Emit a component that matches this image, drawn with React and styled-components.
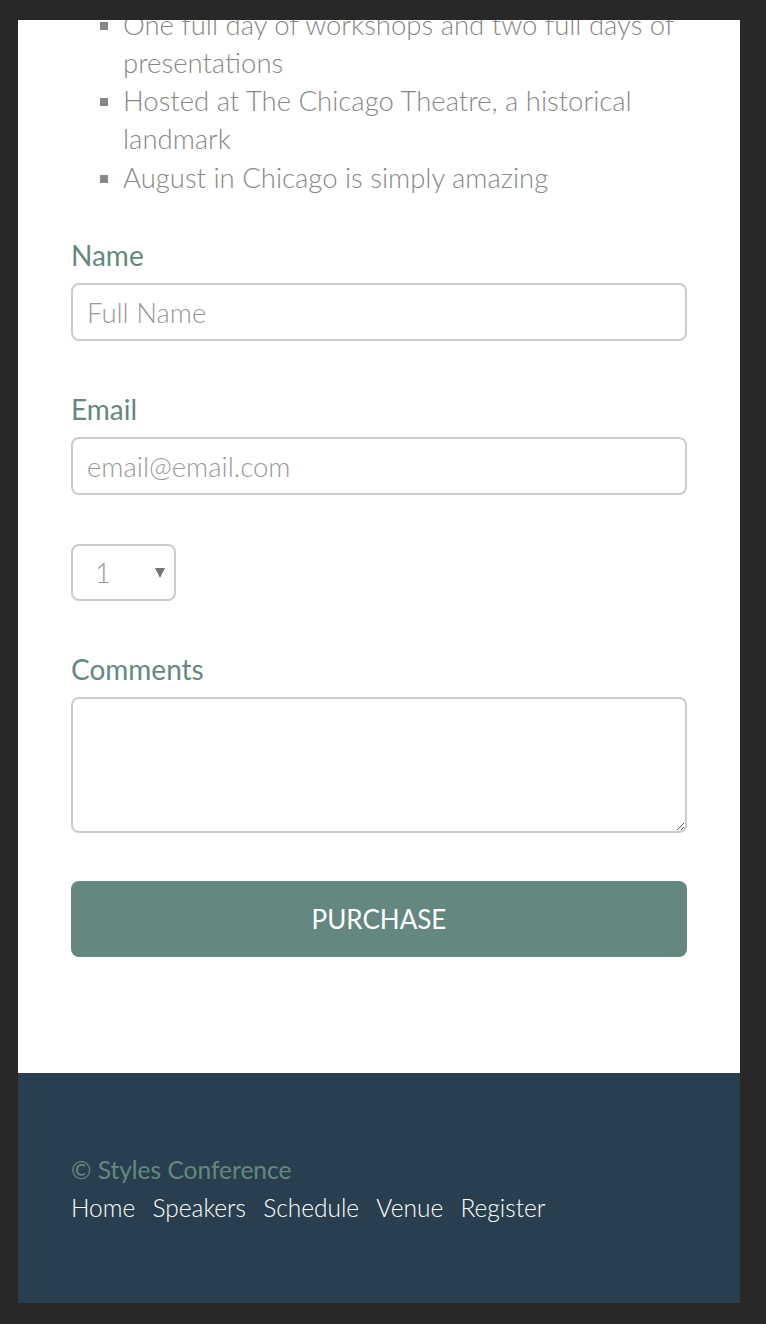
import React from "react";
import styled, { createGlobalStyle } from "styled-components";

const GlobalStyle = createGlobalStyle`
  html, body {
    margin: 0;
    padding: 0;
    background: #282828;
  }
  * {
    box-sizing: border-box;
  }
`;

const Frame = styled.div`
  padding: 20px 26px 21px 18px;
  font-family: "Lato", "Liberation Sans", sans-serif;
`;

const Viewport = styled.div`
  height: 1283px;
  overflow: hidden;
  background: #fff;
  display: flex;
  flex-direction: column;
`;

const Main = styled.section`
  margin-top: -14.5px;
  padding: 0 53px 116px;
`;

const FeatureList = styled.ul`
  list-style: none;
  margin: 0;
  padding: 0 0 0 52px;

  li {
    position: relative;
    color: #888;
    font-size: 27.5px;
    font-weight: 300;
    line-height: 38.3px;
  }

  li::before {
    content: "";
    position: absolute;
    left: -23px;
    top: 16px;
    width: 8px;
    height: 8px;
    background: #888;
  }
`;

const Form = styled.form`
  margin-top: 39.5px;
  display: flex;
  flex-direction: column;
`;

const Field = styled.div`
  display: flex;
  flex-direction: column;
  margin-bottom: 49px;
`;

const Label = styled.label`
  color: #648880;
  font-size: 28px;
  font-weight: 400;
  line-height: 38px;
  margin-bottom: 9px;
`;

const TextInput = styled.input`
  width: 100%;
  height: 58px;
  border: 2px solid #ccc;
  border-radius: 8px;
  padding: 0 14px;
  font-family: inherit;
  font-size: 27.5px;
  font-weight: 300;
  color: #888;
  background: #fff;
  outline: none;

  &::placeholder {
    color: #999;
  }
`;

const TextArea = styled.textarea`
  width: 100%;
  height: 136px;
  border: 2px solid #ccc;
  border-radius: 8px;
  padding: 10px 14px;
  font-family: inherit;
  font-size: 27.5px;
  font-weight: 300;
  resize: vertical;
  outline: none;
`;

const SelectWrap = styled.div`
  position: relative;
  width: 105px;
  height: 57px;
  margin-bottom: 49px;

  &::after {
    content: "";
    position: absolute;
    left: 84px;
    top: 24px;
    border-left: 5px solid transparent;
    border-right: 5px solid transparent;
    border-top: 10px solid #777;
    pointer-events: none;
  }
`;

const Select = styled.select`
  appearance: none;
  width: 100%;
  height: 100%;
  border: 2px solid #ccc;
  border-radius: 8px;
  padding: 0 0 0 22px;
  background: #fff;
  font-family: inherit;
  font-size: 27.5px;
  font-weight: 300;
  color: #999;
  outline: none;
`;

const Button = styled.button`
  width: 100%;
  height: 76px;
  margin-top: -1px;
  border: none;
  border-radius: 8px;
  background: #648880;
  color: #fff;
  font-family: inherit;
  font-size: 26px;
  font-weight: 400;
  text-transform: uppercase;
  cursor: pointer;
`;

const Footer = styled.footer`
  flex: 1;
  background: #293f50;
  padding: 78px 53px 0;
`;

const Copyright = styled.small`
  display: block;
  color: #648880;
  font-size: 24.5px;
  font-weight: 400;
  line-height: 38px;
`;

const Nav = styled.nav`
  display: flex;
  gap: 17.2px;
`;

const NavLink = styled.a`
  color: #fff;
  font-size: 24.5px;
  font-weight: 300;
  line-height: 38px;
  text-decoration: none;
`;

const features = [
  "One full day of workshops and two full days of presentations",
  "Hosted at The Chicago Theatre, a historical landmark",
  "August in Chicago is simply amazing",
];

const links = ["Home", "Speakers", "Schedule", "Venue", "Register"];

export default function App() {
  return (
    <Frame>
      <GlobalStyle />
      <Viewport>
        <Main>
          <FeatureList>
            {features.map(f => (
              <li key={f}>{f}</li>
            ))}
          </FeatureList>
          <Form onSubmit={e => e.preventDefault()}>
            <Field>
              <Label htmlFor="name">Name</Label>
              <TextInput id="name" type="text" placeholder="Full Name" />
            </Field>
            <Field>
              <Label htmlFor="email">Email</Label>
              <TextInput id="email" type="email" placeholder="email@email.com" />
            </Field>
            <SelectWrap>
              <Select defaultValue="1">
                <option>1</option>
                <option>2</option>
                <option>3</option>
                <option>4</option>
                <option>5</option>
              </Select>
            </SelectWrap>
            <Field>
              <Label htmlFor="comments">Comments</Label>
              <TextArea id="comments" />
            </Field>
            <Button type="submit">Purchase</Button>
          </Form>
        </Main>
        <Footer>
          <Copyright>© Styles Conference</Copyright>
          <Nav>
            {links.map(l => (
              <NavLink key={l} href="#">
                {l}
              </NavLink>
            ))}
          </Nav>
        </Footer>
      </Viewport>
    </Frame>
  );
}
